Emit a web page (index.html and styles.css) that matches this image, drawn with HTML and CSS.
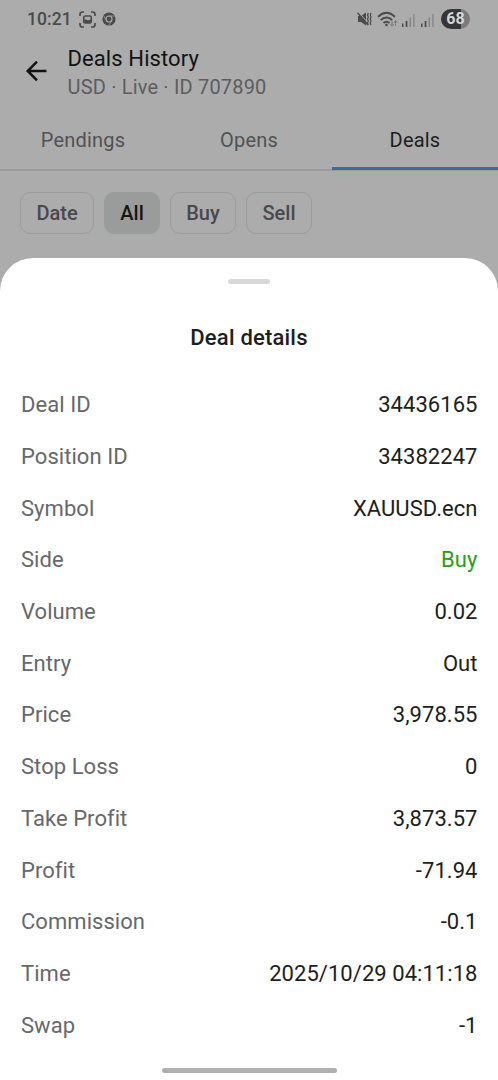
FILE: index.html
```html
<!DOCTYPE html>
<html lang="en">
<head>
<meta charset="utf-8">
<title>Deals History</title>
<link rel="stylesheet" href="styles.css">
</head>
<body>
<div class="screen">
  <div class="status-bar">
    <span class="clock">10:21</span>
    <svg class="icon-capture" width="17" height="17" viewBox="0 0 17 17" fill="none" stroke="currentColor" stroke-width="1.700">
      <path d="M1 5V3.500Q1 1 3.500 1H5M12 1H13.500Q16 1 16 3.500V5M16 12V13.500Q16 16 13.500 16H12M5 16H3.500Q1 16 1 13.500V12"/>
      <rect x="4.800" y="5" width="7.400" height="7" rx="1.500"/>
      <path d="M5 12V9L7 8.500L9 9.200L12 8.500V12Z" fill="currentColor" stroke="none"/>
    </svg>
    <svg class="icon-chrome" width="14" height="14" viewBox="0 0 14 14">
      <circle cx="7" cy="7" r="6.600" fill="currentColor"/>
      <circle cx="7" cy="7" r="3" fill="currentColor" stroke="#acacac" stroke-width="1.100"/>
      <path d="M7 4H12.800M4.400 8.500L1.500 3.500M9.600 8.500L6.700 13.500" stroke="#acacac" stroke-width=".7"/>
    </svg>
    <div class="system-icons">
      <svg width="16" height="16" viewBox="0 0 16 16">
        <path d="M1 5H4L9 1.500V14.500L4 11H1Z" fill="currentColor"/>
        <path d="M1.500 1L12 13" stroke="#acacac" stroke-width="1"/>
        <path d="M.5 1.800L11 14" stroke="currentColor" stroke-width="1.500"/>
        <path d="M11.300 2L10.500 4L11.300 6L10.500 8L11.300 10L10.500 12L11.300 14M14 2L13.200 4L14 6L13.200 8L14 10L13.200 12L14 14" fill="none" stroke="currentColor" stroke-width="1.200"/>
      </svg>
      <svg width="22" height="17" viewBox="0 0 22 17" fill="none" stroke="currentColor" stroke-width="1.900">
        <path d="M1 5.800Q9.500-2.200 18 5.800M3.800 9Q9.500 3.800 15.200 9M6.500 12Q9.500 9.300 12.500 12"/>
        <circle cx="9.500" cy="14" r="1.300" fill="currentColor" stroke="none"/>
        <g stroke-width="1" opacity=".5"><path d="M15 10V15M13.200 13L15 15.300L16.800 13"/><path d="M18.500 15V9.800M16.800 11.800L18.500 9.600L20.300 11.800"/></g>
      </svg>
      <svg class="signal" width="13" height="14" viewBox="0 0 13 14" fill="currentColor">
        <path d="M0 10.500H1.500V14H0ZM3.700 8H5.400V14H3.700Z"/><path opacity=".4" d="M7.500 4.500H9V14H7.500ZM11.200 1H12.600V14H11.200Z"/>
      </svg>
      <svg class="signal second" width="13" height="14" viewBox="0 0 13 14" fill="currentColor">
        <path d="M0 10.500H1.500V14H0ZM3.700 8H5.400V14H3.700Z"/><path opacity=".4" d="M7.500 4.500H9V14H7.500ZM11.200 1H12.600V14H11.200Z"/>
      </svg>
      <span class="battery">68</span>
    </div>
  </div>

  <header class="app-bar">
    <svg width="22" height="22" viewBox="0 0 22 22" fill="none" stroke="currentColor" stroke-width="2.500">
      <path d="M21.500 11H2.500M12 1.700L2.700 11L12 20.300"/>
    </svg>
    <div class="titles">
      <h1>Deals History</h1>
      <p>USD · Live · ID 707890</p>
    </div>
  </header>

  <nav class="tabs">
    <span class="tab">Pendings</span>
    <span class="tab">Opens</span>
    <span class="tab active">Deals</span>
  </nav>

  <div class="filters">
    <span class="chip date">Date</span>
    <span class="chip all">All</span>
    <span class="chip buy-filter">Buy</span>
    <span class="chip sell">Sell</span>
  </div>

  <main class="sheet">
    <div class="handle"></div>
    <h2>Deal details</h2>
    <dl class="details">
      <div class="row"><dt>Deal ID</dt><dd>34436165</dd></div>
      <div class="row"><dt>Position ID</dt><dd>34382247</dd></div>
      <div class="row"><dt>Symbol</dt><dd>XAUUSD.ecn</dd></div>
      <div class="row"><dt>Side</dt><dd class="buy">Buy</dd></div>
      <div class="row"><dt>Volume</dt><dd>0.02</dd></div>
      <div class="row"><dt>Entry</dt><dd>Out</dd></div>
      <div class="row"><dt>Price</dt><dd>3,978.55</dd></div>
      <div class="row"><dt>Stop Loss</dt><dd>0</dd></div>
      <div class="row"><dt>Take Profit</dt><dd>3,873.57</dd></div>
      <div class="row"><dt>Profit</dt><dd>-71.94</dd></div>
      <div class="row"><dt>Commission</dt><dd>-0.1</dd></div>
      <div class="row"><dt>Time</dt><dd>2025/10/29 04:11:18</dd></div>
      <div class="row"><dt>Swap</dt><dd>-1</dd></div>
    </dl>
    <div class="home-bar"></div>
  </main>
</div>
</body>
</html>
```
FILE: styles.css
```css
* { box-sizing: border-box; }
body { margin: 0; background: #acacac; font-family: Roboto, sans-serif; color: #1d1e20; }
h1, h2, p, dl, dd { margin: 0; font-weight: 400; }
svg { display: block; flex: none; }
.screen { width: 498px; height: 1080px; display: flex; flex-direction: column; overflow: hidden; background: #acacac; }

.status-bar { height: 38px; display: flex; align-items: center; padding: 0 28px 0 27px; color: #4b4b4b; }
.clock { width: 44px; font-size: 17.5px; font-weight: 500; letter-spacing: .1px; white-space: nowrap; }
.icon-capture { margin-left: 8px; }
.icon-chrome { margin-left: 6px; }
.system-icons { margin-left: auto; display: flex; align-items: center; }
.system-icons svg + svg { margin-left: 4px; }
.system-icons .signal { margin-left: 3px; margin-top: 2px; }
.system-icons .second { margin-left: 6px; }
.battery { width: 29px; height: 20px; margin-left: 7px; border-radius: 10px; background: linear-gradient(90deg, #353535 70%, #7b7b7b 70%); color: #d4d4d4; font-size: 16px; font-weight: 700; line-height: 20px; text-align: center; }

.app-bar { height: 72px; padding: 7px 0 0 25px; display: flex; gap: 20.5px; color: #131313; }
.app-bar svg { margin-top: 15px; }
.titles h1 { font-size: 22px; line-height: 28px; letter-spacing: .1px; }
.titles p { font-size: 20px; line-height: 29px; color: #5c5d5f; letter-spacing: .18px; }

.tabs { height: 61px; display: grid; grid-template-columns: repeat(3, 1fr); border-bottom: 2px solid #9b9b9b; }
.tab { height: 60px; display: flex; justify-content: center; align-items: center; font-size: 20px; letter-spacing: .2px; color: #515254; }
.tab.active { color: #1d1e20; border-bottom: 3px solid #4168a5; padding-top: 3px; }

.filters { height: 87px; padding: 21px 20px 0; display: flex; gap: 10px; flex: none; }
.chip { height: 42px; border: 1.5px solid #9b9b9b; border-radius: 10px; display: flex; align-items: center; justify-content: center; font-size: 20px; font-weight: 500; color: #48494b; background-clip: padding-box; }
.date { width: 74px; }
.all { width: 56px; background: #9a9c9b; border-color: #9a9c9b; color: #161616; }
.buy-filter { width: 66px; }
.sell { width: 66px; }

.sheet { flex: 1; border-radius: 33px 33px 0 0; background: #fff; display: flex; flex-direction: column; align-items: center; }
.handle { width: 42px; height: 5px; margin-top: 21px; border-radius: 3px; background: #d8d8d8; }
.sheet h2 { margin-top: 39px; font-size: 22px; line-height: 30px; font-weight: 500; letter-spacing: .2px; }
.details { width: 100%; padding: 0 20.5px 0 21px; margin-top: 26.5px; }
.row { height: 51.7px; display: flex; justify-content: space-between; align-items: center; font-size: 22px; line-height: 28px; letter-spacing: .05px; }
.row dt { color: #66686c; }
.buy { color: #2a9d18; }
.home-bar { width: 175px; height: 5px; margin-top: 16.5px; border-radius: 3px; background: #b0b0b0; }
```
